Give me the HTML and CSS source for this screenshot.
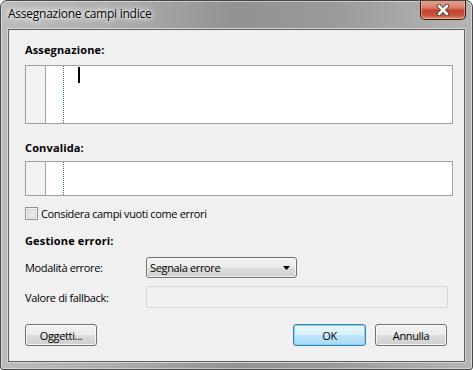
FILE: index.html
```html
<!DOCTYPE html>
<html lang="it">
<head>
<meta charset="utf-8">
<link rel="stylesheet" href="styles.css">
</head>
<body>
<div class="window">
  <div class="titlebar">
    <span class="title">Assegnazione campi indice</span>
    <div class="close">
      <svg width="18" height="12" viewBox="0 0 18 12"><path d="M5 2 L13 10 M13 2 L5 10" stroke="#3a3a3a" stroke-width="4.2" stroke-linecap="round"/><path d="M5 2 L13 10 M13 2 L5 10" stroke="#ffffff" stroke-width="2.6" stroke-linecap="round"/></svg>
    </div>
  </div>
  <div class="client">
    <div class="section-label first">Assegnazione:</div>
    <div class="editor tall">
      <div class="gutter"></div>
      <div class="fold"></div>
      <div class="caret"></div>
    </div>
    <div class="section-label second">Convalida:</div>
    <div class="editor short">
      <div class="gutter"></div>
      <div class="fold"></div>
    </div>
    <label class="check-row">
      <span class="checkbox"></span>
      <span>Considera campi vuoti come errori</span>
    </label>
    <div class="section-label third">Gestione errori:</div>
    <div class="form-row mode">
      <span class="row-label">Modalità errore:</span>
      <div class="combo">
        <span>Segnala errore</span>
        <svg width="7" height="4" viewBox="0 0 7 4"><path d="M0 0 H7 L3.5 4 Z" fill="#000"/></svg>
      </div>
    </div>
    <div class="form-row fallback">
      <span class="row-label">Valore di fallback:</span>
      <div class="input-disabled"></div>
    </div>
    <div class="buttons">
      <button class="btn objects">Oggetti...</button>
      <div class="right-buttons">
        <button class="btn default">OK</button>
        <button class="btn cancel">Annulla</button>
      </div>
    </div>
  </div>
</div>
</body>
</html>
```
FILE: styles.css
```css
html, body {
  margin: 0;
  padding: 0;
  width: 473px;
  height: 370px;
  overflow: hidden;
  background: #ffffff;
}

body {
  font-family: "Open Sans", "Noto Sans", sans-serif;
  font-size: 11px;
  letter-spacing: -0.35px;
  color: #000;
}

.window {
  box-sizing: border-box;
  width: 473px;
  height: 370px;
  border: 1px solid #474747;
  border-radius: 7px 7px 3px 3px;
  background: linear-gradient(to right, #bcbcbc 0%, #acacac 25%, #929292 50%, #9a9a9a 70%, #b5b5b5 100%);
  box-shadow: inset 0 0 0 1px rgba(255,255,255,0.45);
  display: flex;
  flex-direction: column;
  overflow: hidden;
}

.titlebar {
  height: 28px;
  display: flex;
  align-items: flex-start;
  justify-content: space-between;
  padding-left: 7px;
  flex-shrink: 0;
}

.title {
  font-size: 12px;
  letter-spacing: -0.25px;
  margin-top: 4px;
  color: #000;
  text-shadow: 0 0 6px #ffffff, 0 0 10px #ffffff, 0 0 3px rgba(255,255,255,0.8);
}

.close {
  box-sizing: border-box;
  width: 46px;
  height: 20px;
  margin-top: -1px;
  margin-right: 6px;
  border: 1px solid #3d1510;
  border-top: none;
  border-radius: 0 0 5px 5px;
  background: linear-gradient(to bottom, #e7a392 0%, #d9806b 40%, #c2432b 55%, #c8533c 80%, #e08d6d 100%);
  box-shadow: inset 0 0 0 1px rgba(255,220,200,0.45);
  display: flex;
  align-items: center;
  justify-content: center;
}

.client {
  box-sizing: border-box;
  margin: 0 7px 7px 7px;
  flex: 1;
  background: #f0f0f0;
  border: 1px solid #5f5f5f;
  box-shadow: 0 0 0 1px #d6d6d6;
  display: flex;
  flex-direction: column;
  padding: 0 11px 0 16px;
}

.section-label {
  font-weight: 700;
  font-size: 11px;
  line-height: 16px;
  letter-spacing: 0.15px;
}

.section-label.first { margin-top: 12px; }
.section-label.second { margin-top: 16px; }
.section-label.third { margin-top: 13px; }

.editor {
  box-sizing: border-box;
  border: 1px solid #a0a0a0;
  background: #ffffff;
  display: flex;
  position: relative;
}

.editor.tall { height: 59px; margin-top: 7px; }
.editor.short { height: 35px; margin-top: 5px; }

.gutter {
  width: 19px;
  border-right: 1px solid #a0a0a0;
  background-color: #f4f4f4;
  background-image: repeating-conic-gradient(#fafafa 0% 25%, #ececec 0% 50%);
  background-size: 2px 2px;
}

.fold {
  width: 17px;
  border-right: 1px dotted #2b7c7c;
}

.caret {
  width: 2px;
  height: 16px;
  background: #000;
  margin-left: 14px;
  margin-top: 1px;
}

.check-row {
  display: flex;
  align-items: center;
  gap: 3px;
  margin-top: 10px;
  height: 14px;
}

.checkbox {
  box-sizing: border-box;
  width: 13px;
  height: 13px;
  border: 1px solid #8e8f8f;
  background: linear-gradient(135deg, #dcdcdc 0%, #f4f4f4 100%);
  box-shadow: inset 0 0 0 1px #f4f4f4, inset 0 0 0 2px #d0d0d0;
}

.form-row {
  display: flex;
  align-items: center;
}

.row-label {
  width: 121px;
  flex-shrink: 0;
}

.form-row.mode { margin-top: 8px; height: 21px; }
.form-row.fallback { margin-top: 8px; height: 22px; }

.combo {
  box-sizing: border-box;
  width: 151px;
  height: 21px;
  border: 1px solid #707070;
  border-radius: 3px;
  background: linear-gradient(to bottom, #f2f2f2 0%, #ebebeb 49%, #dddddd 51%, #cfcfcf 100%);
  box-shadow: inset 0 0 0 1px rgba(255,255,255,0.7);
  display: flex;
  align-items: center;
  justify-content: space-between;
  padding: 0 6px 0 3px;
}

.input-disabled {
  box-sizing: border-box;
  width: 302px;
  height: 22px;
  border: 1px solid #d5d5d5;
  border-radius: 2px;
  background: #f0f0f0;
}

.buttons {
  display: flex;
  justify-content: space-between;
  margin-top: 16px;
  padding-right: 6px;
}

.right-buttons {
  display: flex;
  gap: 9px;
}

.btn {
  box-sizing: border-box;
  height: 22px;
  font-family: "Open Sans", "Noto Sans", sans-serif;
  font-size: 11px;
  letter-spacing: -0.35px;
  color: #000;
  border: 1px solid #707070;
  border-radius: 3px;
  background: linear-gradient(to bottom, #f2f2f2 0%, #ebebeb 49%, #dddddd 51%, #cfcfcf 100%);
  box-shadow: inset 0 0 0 1px rgba(255,255,255,0.75);
  padding: 0;
}

.btn.objects { width: 72px; }
.btn.default {
  width: 73px;
  border-color: #3c7fb1;
  background: linear-gradient(to bottom, #eaf6fd 0%, #d9f0fc 49%, #bee6fd 51%, #a7d9f5 100%);
  box-shadow: inset 0 0 0 1px #7fd3f7;
}
.btn.cancel { width: 72px; }
```
